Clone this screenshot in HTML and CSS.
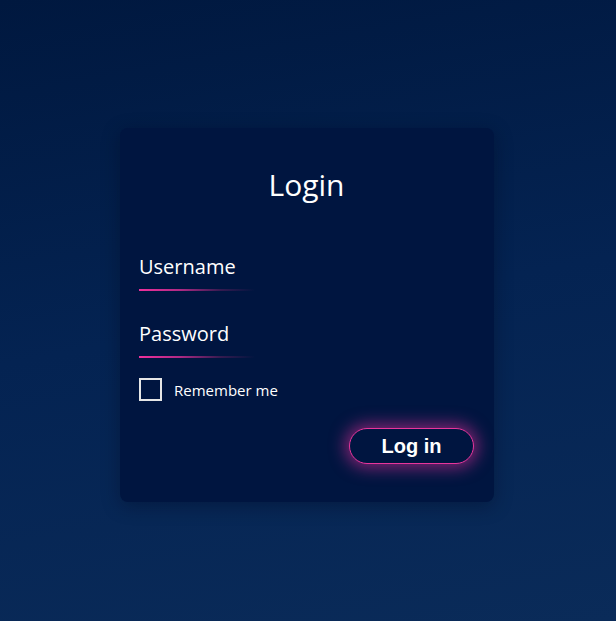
FILE: index.html
```html
<!DOCTYPE html>
<html lang="en">
<head>
<meta charset="utf-8">
<title>Login</title>
<link rel="stylesheet" href="styles.css">
</head>
<body>
<main class="page">
  <form class="card">
    <h1 class="title">Login</h1>
    <div class="field">
      <span class="field-label">Username</span>
    </div>
    <div class="field field-second">
      <span class="field-label">Password</span>
    </div>
    <label class="remember">
      <span class="box"></span>
      <span class="remember-text">Remember me</span>
    </label>
    <div class="actions">
      <button type="button" class="btn">Log in</button>
    </div>
  </form>
</main>
</body>
</html>
```
FILE: styles.css
```css
* { box-sizing: border-box; }
html, body { margin: 0; height: 100%; }
body {
  background: linear-gradient(170deg, #00183f 0%, #042352 50%, #0a2b59 100%);
  font-family: "Open Sans", "Liberation Sans", sans-serif;
  color: #fff;
}
.page {
  min-height: 100vh;
  display: flex;
  justify-content: center;
  align-items: flex-start;
  padding-top: 128px;
  padding-right: 2px;
}
.card {
  width: 374px;
  height: 374px;
  background: #001540;
  border-radius: 8px;
  box-shadow: 0 4px 18px rgba(0, 8, 30, 0.35);
  padding: 37px 20px 0 19px;
  display: flex;
  flex-direction: column;
}
.title {
  margin: 0;
  font-weight: 400;
  font-size: 30px;
  line-height: 40px;
  text-align: center;
  height: 40px;
}
.field {
  margin-top: 48px;
  width: 116px;
  padding-bottom: 8px;
  position: relative;
}
.field::after {
  content: "";
  display: block;
  position: absolute;
  left: 0; right: 0; bottom: -2px;
  height: 2px;
  background: linear-gradient(90deg, #f0309c 0%, #b02a85 35%, rgba(90, 30, 90, 0.6) 70%, rgba(0, 21, 64, 0) 100%);
}
.field-second { margin-top: 31px; }
.field-label {
  display: block;
  font-size: 20px;
  line-height: 28px;
  white-space: nowrap;
}
.remember {
  margin-top: 22px;
  display: flex;
  align-items: center;
  gap: 12px;
  height: 23px;
}
.box {
  width: 23px;
  height: 23px;
  border: 2px solid #e6e6e6;
  flex: none;
}
.remember-text {
  font-size: 15px;
  line-height: 20px;
  position: relative;
  top: 0;
}
.actions {
  margin-top: 27px;
  display: flex;
  justify-content: flex-end;
}
.btn {
  width: 125px;
  height: 36px;
  border-radius: 18px;
  border: 1px solid #e8359c;
  background: #001540;
  color: #fff;
  font-family: "Liberation Sans", Arial, sans-serif;
  font-weight: 700;
  font-size: 20px;
  line-height: 1;
  padding: 0;
  box-shadow: 0 0 16px 4px rgba(232, 48, 154, 0.55);
}
```
